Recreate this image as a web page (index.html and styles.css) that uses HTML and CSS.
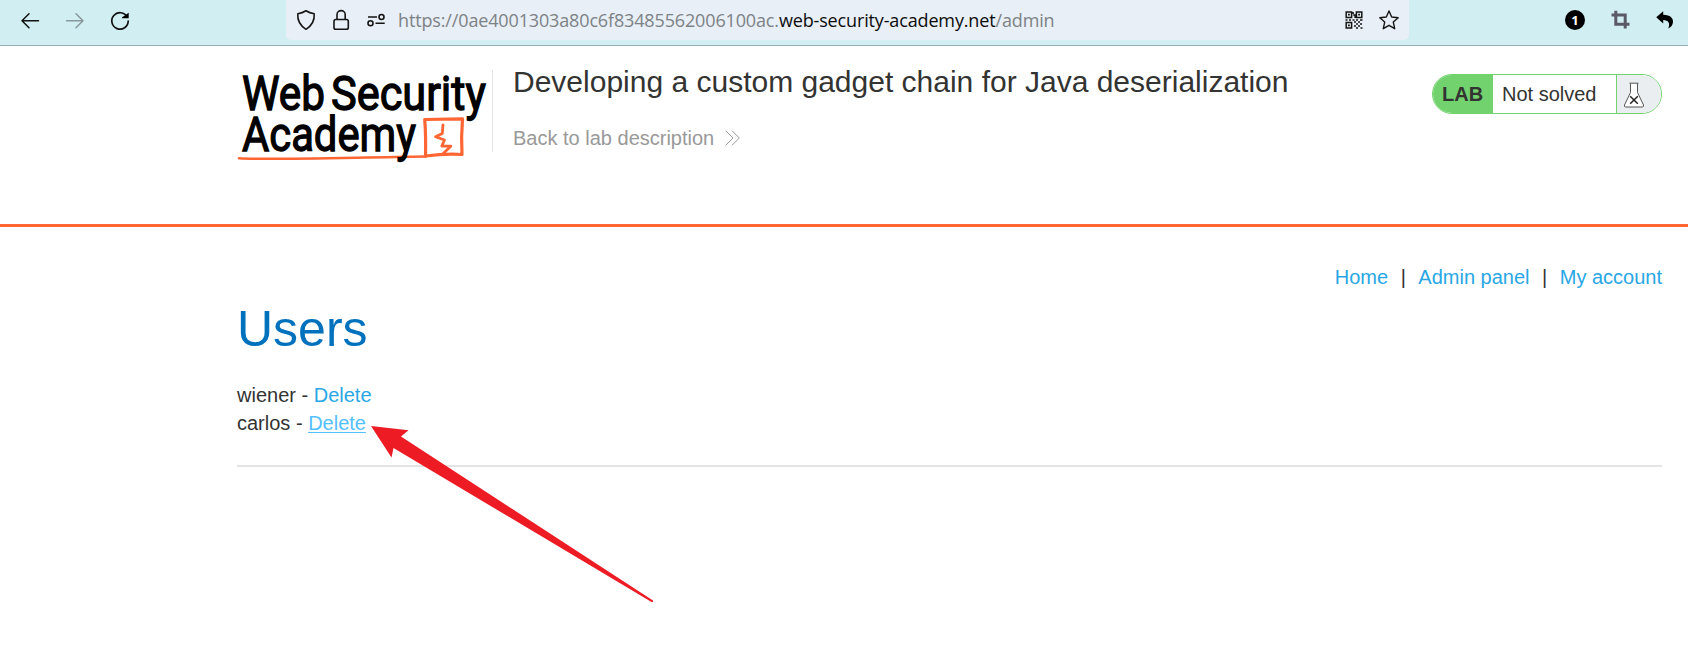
FILE: index.html
```html
<!DOCTYPE html>
<html lang="en">
<head>
<meta charset="utf-8">
<title>Developing a custom gadget chain for Java deserialization</title>
<link rel="stylesheet" href="styles.css">
</head>
<body>
<div class="toolbar">
  <div class="nav-buttons">
    <svg width="140" height="40" viewBox="0 0 140 40" fill="none" stroke="#111" stroke-width="1.5" stroke-linecap="round" stroke-linejoin="round">
      <path d="M38.5 20.7H22M29 13.7l-7 7 7 7"/>
      <path stroke="#87999c" d="M66.5 20.7H83M76 13.7l7 7-7 7"/>
      <path stroke-width="1.7" d="M127.2 17A8.2 8.2 0 1 0 128.2 21"/>
      <path fill="#000" stroke="none" d="M128.7 12.8v5.4h-6.5q-.5-.5 0-1z"/>
    </svg>
  </div>
  <div class="address">
    <svg class="address-icons" width="104" height="40" viewBox="286 0 104 40" fill="none" stroke="#151515" stroke-width="1.6" stroke-linejoin="round">
      <path d="M306 10.8Q309.500 13 314.200 13.700Q315 23.500 306 29.300Q297 23.500 297.800 13.700Q302.500 13 306 10.800Z"/>
      <rect x="334" y="19.500" width="14.300" height="9.700" rx="1.800"/>
      <path d="M337 19.500v-4.800a4 4 0 0 1 8.200 0v4.800"/>
      <path d="M368 17h9M375.500 23.300h9.200"/>
      <circle cx="381.500" cy="17" r="2.500"/><circle cx="370.500" cy="23.300" r="2.500"/>
    </svg>
    <div class="url"><span class="host-prefix">https://0ae4001303a80c6f83485562006100ac.</span><span class="domain">web-security-academy.net</span><span>/admin</span></div>
    <svg class="page-actions" width="66" height="40" viewBox="1343 0 66 40" fill="none" stroke="#151515" stroke-width="1.500">
      <path d="M1346.200 12h5.400v5.400h-5.400zM1356.400 12h5.400v5.400h-5.400zM1346.200 22.600h5.400v5.400h-5.400z"/>
      <path stroke-width="1.700" d="M1348 14.700h1.800M1358.200 14.700h1.800M1348 25.300h1.800M1353 12v2M1353.200 15h2v3M1345.500 20h2M1349 20h2M1352.500 20h2M1356 20h2M1360 20h2.500M1354 22h2M1358 22h2M1356 24h2M1360 24h2M1354 26h2M1358 26h2M1356 28h2M1360.500 28h2"/>
      <path stroke-width="1.400" stroke-linejoin="round" d="M1389 11l2.700 6 6.500.700-4.900 4.400 1.400 6.600-5.700-3.400-5.700 3.400 1.400-6.600-4.900-4.400 6.500-.700z"/>
    </svg>
  </div>
  <div class="extensions">
    <span class="counter">1</span>
    <svg width="19" height="20" viewBox="0 0 19 20" fill="none" stroke="#5b5966" stroke-width="3">
      <path d="M.5 5h13.700v13.500M4.800.8v13.500h13.700"/>
    </svg>
    <svg width="18" height="18" viewBox="0 0 18 18"><path fill="#000" d="M.2 6.200 7.200.2v3.600C14.500 3.800 17.300 7.500 17 11c-.2 3.500-2.500 5.500-4.800 6.500C14.500 12.500 12.500 9 7.200 9v3.500z"/></svg>
  </div>
</div>
<header class="lab-header">
  <div class="logo">
    <svg width="255" height="96" viewBox="237 70 255 96">
      <g class="logo-text">
        <text x="242" y="110" textLength="83" lengthAdjust="spacingAndGlyphs">Web</text>
        <text x="331" y="110" textLength="155" lengthAdjust="spacingAndGlyphs">Security</text>
      </g>
      <g fill="none" stroke="#ff6633" stroke-linejoin="round" stroke-linecap="round">
        <path stroke-width="2.600" d="M239 158.300C262 160 330 158 425.500 156.500"/>
        <path stroke-width="3.200" d="M425.500 156.500Q426 135 424.700 119.500L462.500 118.800Q461 137 462 154.500Q445 153.500 425.500 156"/>
        <path stroke-width="2.800" d="M443 125l-.7 8.500-6.800 3.200 9 3.300-2.700 6 9 .2-8.300 8"/>
      </g>
      <g class="logo-text"><text x="242" y="151" textLength="174" lengthAdjust="spacingAndGlyphs">Academy</text></g>
    </svg>
  </div>
  <div class="title-block">
    <h2>Developing a custom gadget chain for Java deserialization</h2>
    <a class="back">Back to lab description<svg width="15" height="16" viewBox="0 0 15 16" fill="none" stroke="#999" stroke-width="1"><path d="M.7.7 8 8 .7 15.300M7 .7 14.300 8 7 15.300"/></svg></a>
  </div>
  <div class="status">
    <span class="status-tag">LAB</span>
    <span class="status-text">Not solved</span>
    <span class="status-icon"><svg width="22" height="26" viewBox="0 0 22 26" fill="#fff" stroke="#555" stroke-width="1"><path d="M7.500 1.500v9L1.500 23q-.5 2 1.200 2h16.600q1.700 0 1.200-2l-6-12.500v-9M6.500 1.200h9"/><path fill="none" stroke="#222" stroke-width="1.500" d="m7.200 14.200 7.600 7.600m0-7.600-7.600 7.600"/></svg></span>
  </div>
</header>
<main>
  <nav><a>Home</a><span>|</span><a>Admin panel</a><span>|</span><a>My account</a></nav>
  <h1>Users</h1>
  <div class="user">wiener - <a>Delete</a></div>
  <div class="user">carlos - <a class="hovered">Delete</a></div>
  <hr>
</main>
<svg class="annotation" width="284" height="178" viewBox="370 425 284 178"><path fill="#ed1c24" d="M371 426l37.500 4.300-7.500 6.200L653 600.500v1.500h-1.500L393.500 448l-2 9.500z"/></svg>
</body>
</html>
```
FILE: styles.css
```css
* { box-sizing: border-box; }
body {
  margin: 0;
  height: 652px;
  overflow: hidden;
  background: #fff;
  color: #333332;
  font: 20px/28px "Liberation Sans", Arial, sans-serif;
}
svg { display: block; flex: none; }
.toolbar {
  display: flex;
  height: 46px;
  background: #d1eef2;
  border-bottom: 1px solid #96adb1;
}
.nav-buttons { width: 286px; }
.address {
  display: flex;
  width: 1123px;
  height: 40px;
  background: #e8eff6;
  border-radius: 0 0 5px 5px;
}
.url {
  flex: 1;
  padding-left: 8px;
  color: #7d8286;
  font: 18px/41px "Open Sans", "Noto Sans", sans-serif;
  letter-spacing: -.145px;
  white-space: nowrap;
}
.domain { color: #0c0c0d; }
.extensions {
  display: flex;
  flex: 1;
  align-items: center;
  justify-content: flex-end;
  height: 40px;
  gap: 26px;
  padding-right: 14px;
}
.counter {
  width: 20px;
  height: 20px;
  border-radius: 50%;
  background: #000;
  color: #fff;
  font: bold 13px/20px "Open Sans", sans-serif;
  text-align: center;
}
.lab-header {
  display: flex;
  height: 181px;
  padding: 24px 26px 0 237px;
  border-bottom: 3px solid #ff6633;
}
.logo {
  width: 256px;
  height: 82px;
  border-right: 1px solid #e4e4e4;
}
.logo svg { overflow: visible; }
.logo-text {
  font: 400 48px "Roboto", sans-serif;
  fill: #000;
  stroke: #000;
  stroke-width: 1.3;
}
.title-block { flex: 1; padding-left: 20px; }
h2 { margin: -9px 0 0; font-size: 30px; line-height: 42px; font-weight: 400; white-space: nowrap; }
.back { display: flex; align-items: center; gap: 11px; margin-top: 21px; }
.status {
  display: flex;
  width: 230px;
  height: 40px;
  margin-top: 4px;
  border: 1px solid #72d36e;
  border-radius: 20px;
  overflow: hidden;
  line-height: 39px;
}
.status-tag { width: 60px; padding-left: 9px; background: #72d36e; font-weight: 700; }
.status-text { width: 123px; padding-left: 9px; }
.status-icon {
  flex: 1;
  padding: 7px 0 0 6px;
  background: #eaeef1;
  border-left: 1px solid #72d36e;
}
main { padding: 36px 26px 0 237px; }
nav { display: flex; justify-content: flex-end; gap: 12.5px; }
a { color: #29a7e5; }
.back { color: #999; }
h1 { margin: 3px 0 17px; color: #0071bd; font-size: 50px; line-height: 70px; font-weight: 400; }
.user { height: 28px; }
.hovered { color: #54c0ff; text-decoration: underline; text-decoration-thickness: 1px; text-underline-offset: 2px; }
hr { height: 2px; margin: 28px 0 0; border: 0; background: #e4e4e4; }
.annotation { position: absolute; left: 370px; top: 425px; }
```
